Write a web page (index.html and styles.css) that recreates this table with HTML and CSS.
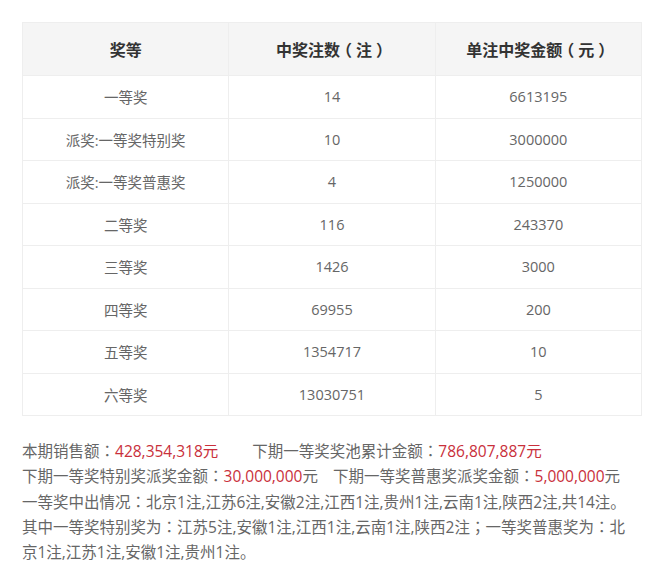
FILE: index.html
```html
<!DOCTYPE html>
<html lang="zh-CN">
<head>
<meta charset="utf-8">
<title>开奖详情</title>
<link rel="stylesheet" href="styles.css">
</head>
<body>
<div class="wrap">
  <table class="prize-table">
    <thead>
      <tr><th>奖等</th><th>中奖注数<span class="pb">（</span>注<span class="pb">）</span></th><th>单注中奖金额<span class="pb">（</span>元<span class="pb">）</span></th></tr>
    </thead>
    <tbody>
      <tr><td>一等奖</td><td>14</td><td>6613195</td></tr>
      <tr><td>派奖:一等奖特别奖</td><td>10</td><td>3000000</td></tr>
      <tr><td>派奖:一等奖普惠奖</td><td>4</td><td>1250000</td></tr>
      <tr><td>二等奖</td><td>116</td><td>243370</td></tr>
      <tr><td>三等奖</td><td>1426</td><td>3000</td></tr>
      <tr><td>四等奖</td><td>69955</td><td>200</td></tr>
      <tr><td>五等奖</td><td>1354717</td><td>10</td></tr>
      <tr><td>六等奖</td><td>13030751</td><td>5</td></tr>
    </tbody>
  </table>
  <div class="info">
    <p>本期销售额<span class="cc" lang="zh-TW">：</span><span class="red">428,354,318元</span><span class="gap-lg">下期一等奖奖池累计金额<span class="cc" lang="zh-TW">：</span><span class="red">786,807,887元</span></span></p>
    <p>下期一等奖特别奖派奖金额<span class="cc" lang="zh-TW">：</span><span class="red">30,000,000</span>元<span class="gap-sm">下期一等奖普惠奖派奖金额<span class="cc" lang="zh-TW">：</span><span class="red">5,000,000</span>元</span></p>
    <p>一等奖中出情况<span class="cc" lang="zh-TW">：</span>北京1注,江苏6注,安徽2注,江西1注,贵州1注,云南1注,陕西2注,共14注。</p>
    <p><span>其中一等奖特别奖为</span><span class="cc" lang="zh-TW">：</span><span>江苏5注,安徽1注,江西1注,云南1注,陕西2注</span><span class="cc" lang="zh-TW">；</span><span>一等奖普惠奖为</span><span class="cc" lang="zh-TW">：</span><span>北</span><span>京1注,江苏1注,安徽1注,贵州1注。</span></p>
  </div>
</div>
</body>
</html>
```

FILE: styles.css
```css
html, body {
  margin: 0;
  padding: 0;
  background: #fff;
}
body {
  font-family: "Open Sans", "Noto Sans CJK SC", sans-serif;
  color: #666;
}
.wrap {
  padding: 22px 8px 0 22px;
  width: 620px;
}
.prize-table {
  width: 620px;
  border-collapse: collapse;
  table-layout: fixed;
  border: 1px solid #eeeeee;
}
.prize-table th,
.prize-table td {
  border: 1px solid #eeeeee;
  text-align: center;
  padding: 0;
}
.prize-table th {
  height: 52px;
  background: #f5f5f5;
  color: #333;
  font-size: 16px;
  font-weight: bold;
}
.prize-table td {
  height: 41.5px;
  font-size: 14.5px;
  color: #666;
}
/* full-width brackets: half-width glyph centred by equal padding */
.pb {
  font-family: "Noto Sans CJK SC", sans-serif;
  font-feature-settings: "halt";
  padding: 0 0.25em;
}
/* centred colon / semicolon (Traditional-style glyph) */
.cc {
  font-family: "Noto Sans CJK TC", "Noto Sans CJK SC", sans-serif;
}
.info {
  margin-top: 22px;
  width: 612px;
  font-size: 15.5px;
  line-height: 24.4px;
}
.info p {
  margin: 0;
}
.red {
  color: #c9303b;
}
.gap-lg {
  margin-left: 34px;
}
.gap-sm {
  margin-left: 15px;
}
```
